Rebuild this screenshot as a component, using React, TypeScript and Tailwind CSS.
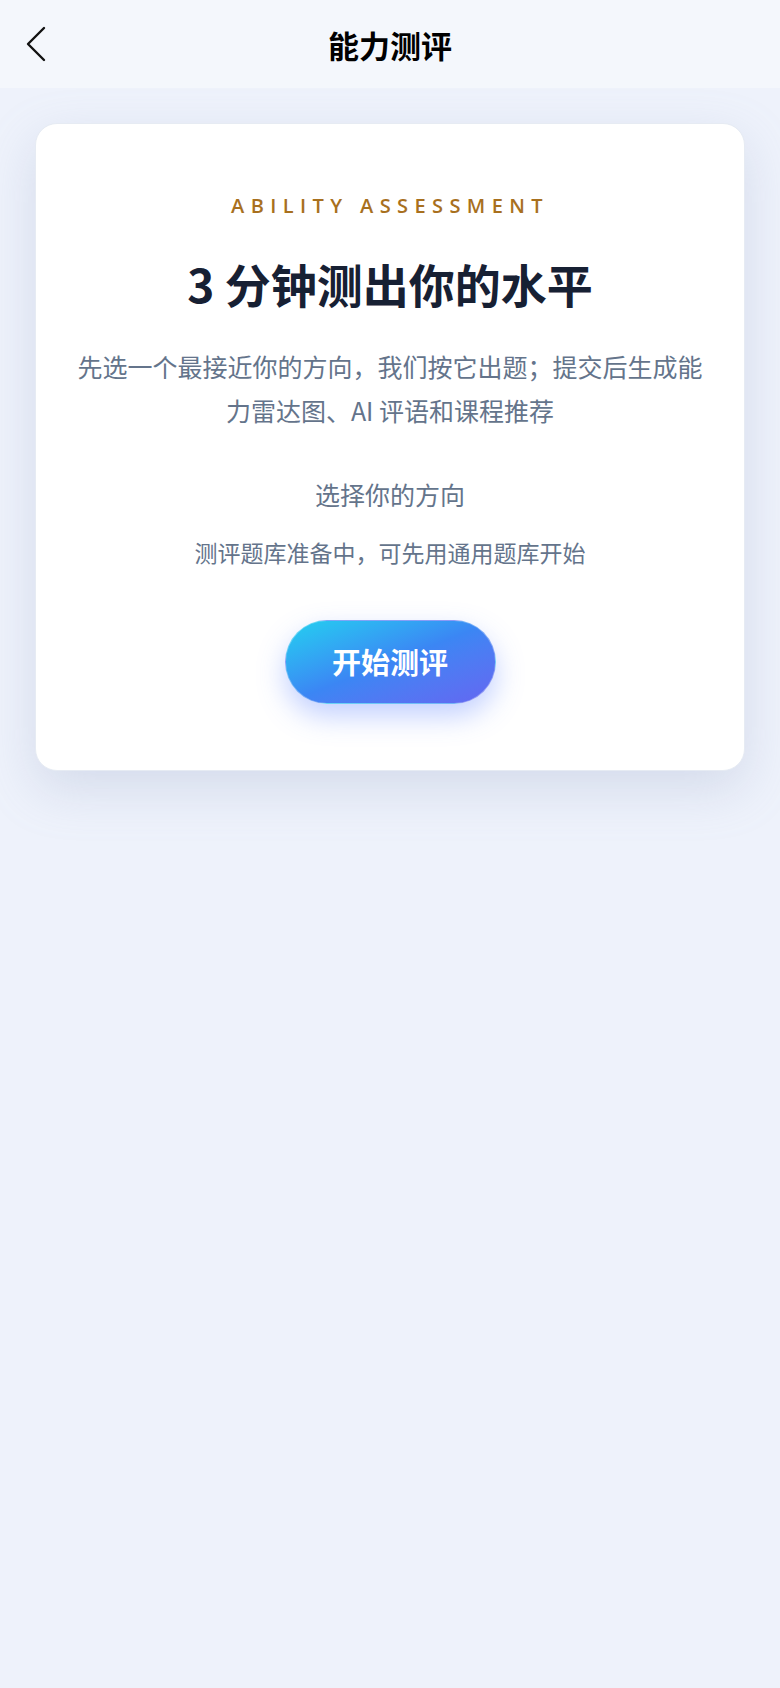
import React from 'react';

const cjk = { fontFamily: '"Noto Sans CJK SC", "Noto Sans", sans-serif' };

const BackIcon = () => (
  <svg width="22" height="36" viewBox="0 0 22 36" fill="none">
    <path d="M19 2 L3 18 L19 34" stroke="#111" strokeWidth="2.4" strokeLinecap="round" strokeLinejoin="round" />
  </svg>
);

const App = () => {
  return (
    <div className="min-h-screen w-full bg-[#eef2fb]" style={cjk}>
      {/* header */}
      <header className="relative flex h-[88px] items-center justify-center bg-[#f4f7fc]">
        <button className="absolute left-[25px] top-[26px] flex items-center">
          <BackIcon />
        </button>
        <h1 className="text-[31px] font-bold leading-none text-black">能力测评</h1>
      </header>

      <main className="px-[35px] pt-[35px]">
        <section className="flex flex-col items-center rounded-[22px] border border-[#e6ebf3] bg-white px-[40px] pt-[68px] pb-[66px] text-center shadow-[0_18px_50px_rgba(148,163,196,0.28)]">
          <p
            className="text-[20px] font-semibold leading-[28px] tracking-[0.32em] text-[#a8701e]"
            style={{ fontFamily: '"Open Sans", "Noto Sans", sans-serif' }}
          >
            ABILITY ASSESSMENT
          </p>

          <h2 className="mt-[35px] text-[46px] font-bold leading-[56px] text-[#172033]">
            3 分钟测出你的水平
          </h2>

          <p className="mt-[33px] text-[25px] leading-[44px] text-[#64748b]">
            先选一个最接近你的方向，我们按它出题；提交后生成能力雷达图、AI 评语和课程推荐
          </p>

          <p className="mt-[44px] text-[25px] leading-[36px] text-[#64748b]">选择你的方向</p>

          <p className="mt-[24px] text-[23px] leading-[32px] text-[#64748b]">
            测评题库准备中，可先用通用题库开始
          </p>

          <button className="mt-[52px] flex h-[84px] w-[211px] items-center justify-center rounded-full border border-white/30 bg-gradient-to-br from-[#22d0ef] via-[#3b86f4] to-[#6366f1] text-[29px] font-bold text-white shadow-[0_12px_28px_rgba(80,120,255,0.35)]">
            开始测评
          </button>
        </section>
      </main>
    </div>
  );
};

export default App;
